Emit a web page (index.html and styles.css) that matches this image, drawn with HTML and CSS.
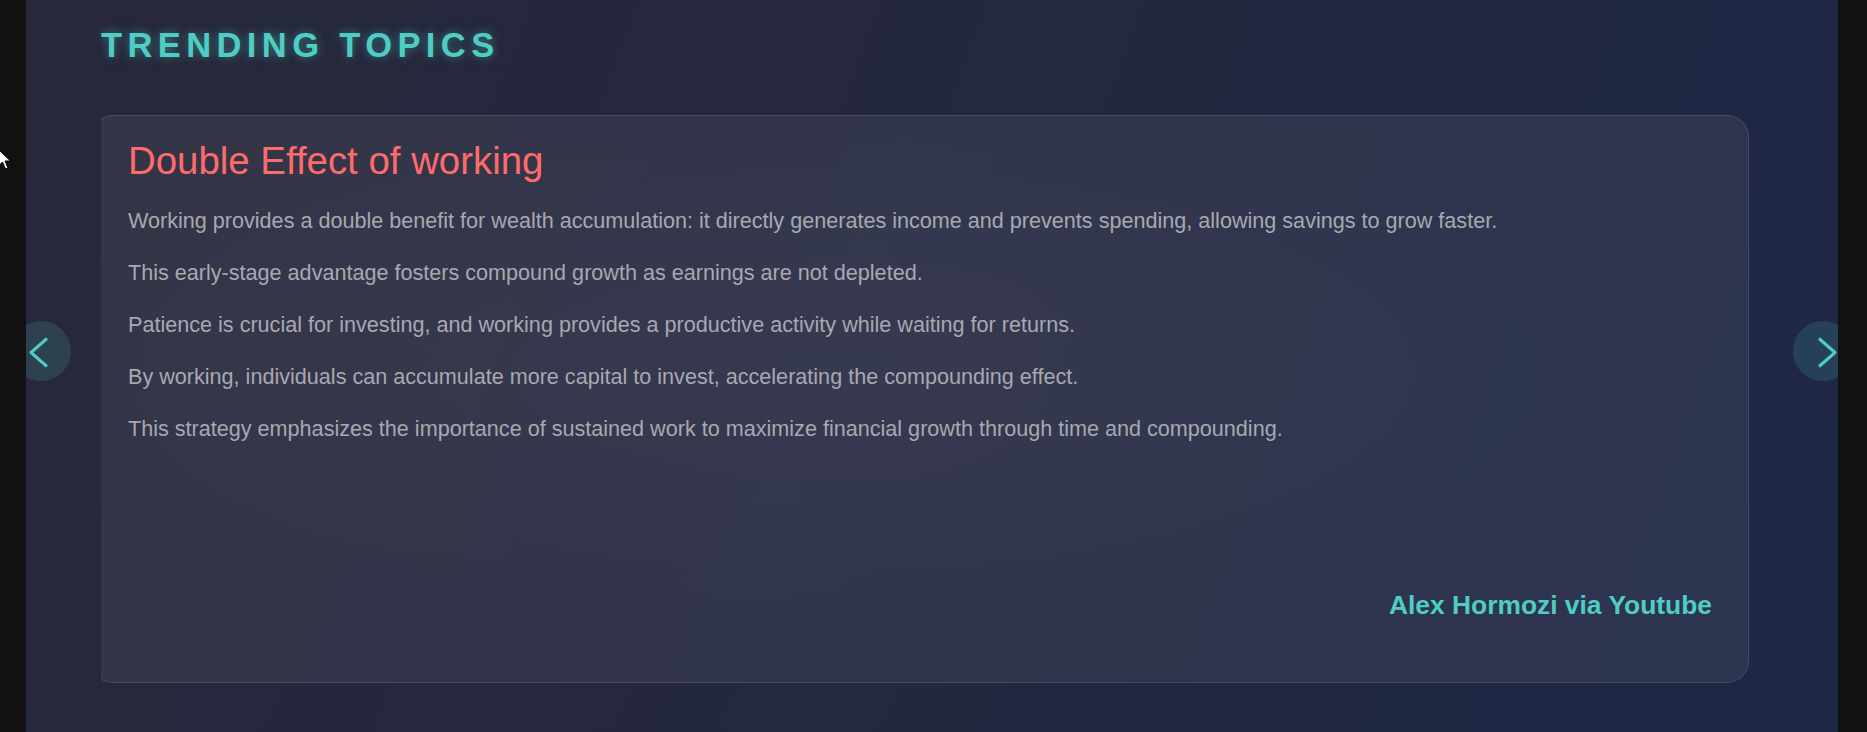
FILE: index.html
```html
<!DOCTYPE html>
<html lang="en">
<head>
<meta charset="utf-8">
<title>Trending Topics</title>
<link rel="stylesheet" href="styles.css">
</head>
<body>
  <svg class="cursor" width="14" height="22" viewBox="0 0 14 22" aria-hidden="true">
    <polygon points="0.5,0.5 0.5,17 4.5,13 7.5,20 10,19 7,12 12.5,12" fill="#fff" stroke="#000" stroke-width="1"/>
  </svg>
  <main class="panel">
    <h2 class="section-title">TRENDING TOPICS</h2>
    <div class="carousel">
      <article class="card">
        <h3 class="card-title">Double Effect of working</h3>
        <p class="card-text">Working provides a double benefit for wealth accumulation: it directly generates income and prevents spending, allowing savings to grow faster.</p>
        <p class="card-text">This early-stage advantage fosters compound growth as earnings are not depleted.</p>
        <p class="card-text">Patience is crucial for investing, and working provides a productive activity while waiting for returns.</p>
        <p class="card-text">By working, individuals can accumulate more capital to invest, accelerating the compounding effect.</p>
        <p class="card-text">This strategy emphasizes the importance of sustained work to maximize financial growth through time and compounding.</p>
        <div class="card-source">Alex Hormozi via Youtube</div>
      </article>
    </div>
    <button class="nav nav-prev" aria-label="Previous">
      <svg width="60" height="60" viewBox="0 0 60 60"><polyline points="36,17.5 20,31.5 36,45.5" fill="none" stroke="#4ecdc4" stroke-width="3" stroke-linejoin="round"/></svg>
    </button>
    <button class="nav nav-next" aria-label="Next">
      <svg width="60" height="60" viewBox="0 0 60 60"><polyline points="26,17.5 42,31.5 26,45.5" fill="none" stroke="#4ecdc4" stroke-width="3" stroke-linejoin="round"/></svg>
    </button>
  </main>
</body>
</html>
```

FILE: styles.css
```css
html, body {
  margin: 0;
  height: 100%;
}

body {
  position: relative;
  background: #111111;
  padding: 0 29px 0 26px;
  box-sizing: border-box;
  font-family: "Liberation Sans", Arial, sans-serif;
  overflow: hidden;
}

.cursor {
  position: absolute;
  left: -2px;
  top: 149px;
  z-index: 5;
}

.panel {
  position: relative;
  height: 732px;
  box-sizing: border-box;
  overflow: hidden;
  padding: 26px 79px 0 75px;
  background: linear-gradient(110deg, #27283a 0%, #242840 50%, #1e2746 100%);
}

.section-title {
  margin: 0;
  font-size: 34.5px;
  font-weight: 700;
  letter-spacing: 5.4px;
  line-height: normal;
  color: #4ecdc4;
  text-shadow: 0 0 10px rgba(78, 205, 196, 0.5);
}

.carousel {
  margin-top: 50px;
  overflow: hidden;
}

.card {
  display: flex;
  flex-direction: column;
  height: 568px;
  box-sizing: border-box;
  padding: 23px 36px 61px;
  border: 1px solid rgba(255, 255, 255, 0.1);
  border-radius: 22px;
  background:
    radial-gradient(ellipse at 45% 45%, rgba(255, 255, 255, 0.025), rgba(255, 255, 255, 0) 60%),
    rgba(255, 255, 255, 0.062);
  transform: translateX(-10px);
}

.card-title {
  margin: 0 0 23px;
  font-size: 38.4px;
  font-weight: 400;
  line-height: normal;
  color: #ff6b6b;
}

.card-text {
  margin: 0 0 21.6px;
  font-size: 21.6px;
  line-height: 1.41;
  color: #a8a8b0;
}

.card-source {
  margin-top: auto;
  text-align: right;
  font-size: 26.4px;
  font-weight: 700;
  line-height: normal;
  color: #4ecdc4;
}

.nav {
  position: absolute;
  top: 321px;
  width: 60px;
  height: 60px;
  padding: 0;
  border: none;
  border-radius: 50%;
  background: rgba(78, 205, 196, 0.15);
  cursor: pointer;
}

.nav svg {
  display: block;
}

.nav-prev {
  left: -15px;
}

.nav-next {
  right: -15px;
}
```
